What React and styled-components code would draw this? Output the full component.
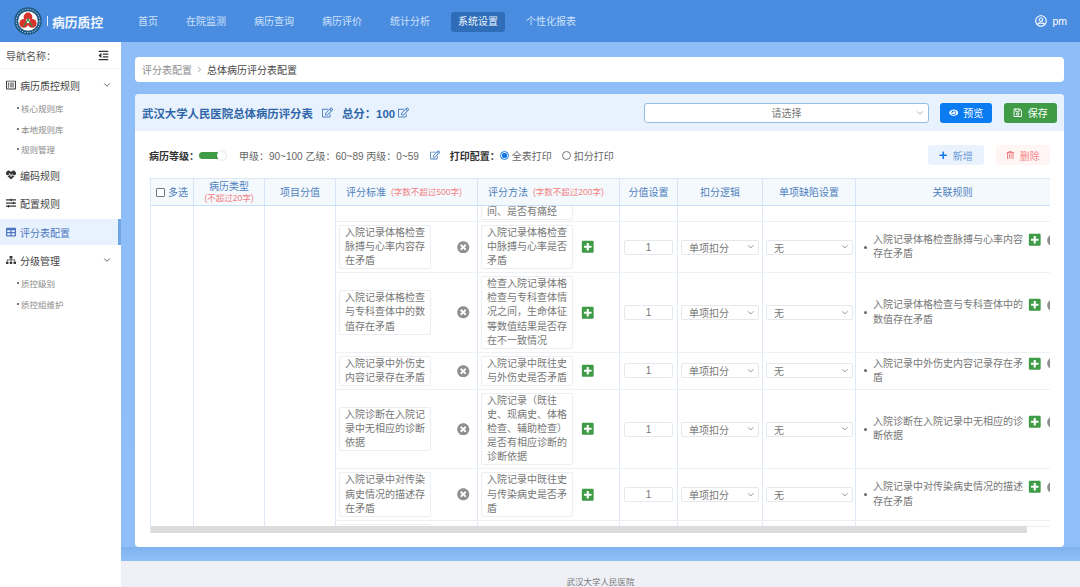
import React from 'react';
import styled, { createGlobalStyle } from 'styled-components';
import {
  FaRegEdit, FaEye, FaRegSave, FaPlus, FaRegTrashAlt, FaPlusSquare, FaTimesCircle,
  FaHeartbeat, FaSlidersH, FaTable, FaSitemap, FaOutdent, FaRegUserCircle, FaRegListAlt
} from 'react-icons/fa';
import { FiChevronDown, FiChevronRight } from 'react-icons/fi';

const BLUE_TEXT = '#4f7fbd';
const LINE = '#dfe9f5';
const GREEN = '#3f9b46';

// full width punctuation
const COLON = '\uFF1A';
const COMMA = '\uFF0C';
const LP = '\uFF08';
const RP = '\uFF09';

const GlobalStyle = createGlobalStyle`
html, body {
  margin: 0;
  height: 587px;
  overflow: hidden;
  font-family: "Liberation Sans", "Noto Sans CJK SC", sans-serif;
  color: #666;
}
* { box-sizing: border-box; }
`;

const Page = styled.div`
width: 1080px;
height: 587px;
display: flex;
flex-direction: column;
overflow: hidden;
`;

const TopBar = styled.header`
height: 42px;
flex: none;
display: flex;
align-items: center;
padding: 0 13px 0 14px;
background: #4a8de0;
color: #fff;
`;

const Brand = styled.div`
width: 117px;
display: flex;
align-items: center;
gap: 4px;
font-size: 12.8px;
font-weight: 700;
color: #f2f7fe;
`;

const BrandBar = styled.span`
width: 1px;
height: 10px;
margin-left: 1px;
background: #e6f0fc;
`;

const NavList = styled.nav`
flex: 1;
display: flex;
align-items: center;
gap: 14px;
margin-top: 1px;
`;

const NavItem = styled.div`
padding: 3px 7px;
font-size: 10px;
line-height: 14px;
border-radius: 3px;
color: ${props => props.$active ? '#eaf3ff' : '#cfe2fb'};
background: ${props => props.$active ? '#2f6db8' : 'transparent'};
`;

const UserBox = styled.div`
display: flex;
align-items: center;
gap: 5px;
font-size: 10.5px;
svg { font-size: 12px; }
`;

const Body = styled.div`
flex: 1;
display: flex;
min-height: 0;
`;

const Side = styled.aside`
width: 121px;
flex: none;
background: #fff;
font-size: 10px;
`;

const SideHead = styled.div`
height: 27px;
padding: 0 12px 0 6px;
display: flex;
align-items: center;
justify-content: space-between;
font-size: 10px;
color: #555;
border-bottom: 1px solid #f2f4f7;
svg { font-size: 11px; color: #333; }
`;

const SideItem = styled.div`
height: ${props => props.$h || 27}px;
margin-top: ${props => props.$mt || 0}px;
padding: 0 ${props => props.$active ? 6 : 9}px 0 6px;
display: flex;
align-items: center;
gap: 4px;
color: ${props => props.$active ? '#4f78c0' : '#444'};
background: ${props => props.$active ? '#e8f2fe' : 'transparent'};
border-right: ${props => props.$active ? '3px solid #6fa3e4' : '0'};
font-size: 10px;
> svg:first-child { width: 10px; font-size: 10px; color: ${props => props.$active ? '#4f78c0' : '#333'}; }
`;

const SideLabel = styled.span`
flex: 1;
`;

const SubItem = styled.div`
height: 20.5px;
padding-left: 17px;
display: flex;
align-items: center;
font-size: 8.5px;
color: #8b8b8b;
&::before {
  content: '';
  width: 2px;
  height: 2px;
  margin-right: 2px;
  background: #777;
}
`;

const Content = styled.main`
flex: 1;
display: flex;
flex-direction: column;
min-width: 0;
`;

const Stage = styled.div`
height: 519px;
flex: none;
padding: 15px 16px 14px 14px;
display: flex;
flex-direction: column;
gap: 12px;
background: linear-gradient(180deg, #8fbdf8 0%, #90bef9 97.2%, #7fb3ee 97.3%, #90bff9 100%);
`;

const Crumbs = styled.div`
height: 25px;
flex: none;
display: flex;
align-items: center;
gap: 3px;
padding: 0 7px;
background: #fff;
border-radius: 4px;
font-size: 10px;
color: #8e8e8e;
b { font-weight: 400; color: #484848; }
svg { font-size: 9px; color: #888; }
`;

const Panel = styled.section`
flex: 1;
min-height: 0;
display: flex;
flex-direction: column;
background: #fff;
border-radius: 4px;
overflow: hidden;
`;

const PanelHead = styled.div`
height: 37px;
flex: none;
display: flex;
align-items: center;
padding: 0 7px;
background: #e8f2fe;
`;

const PanelTitle = styled.div`
display: flex;
align-items: center;
font-size: 11.4px;
font-weight: 700;
color: #2f66a8;
white-space: nowrap;
`;

const EditIcon = styled(FaRegEdit)`
font-size: ${props => props.$size || 11}px;
margin-left: ${props => props.$ml || 0}px;
margin-right: ${props => props.$mr || 0}px;
color: #4a7fc0;
flex: none;
`;

const PlanSelect = styled.div`
width: 285px;
height: 20px;
margin-left: 235px;
position: relative;
display: flex;
align-items: center;
justify-content: center;
background: #fff;
border: 1px solid #90bde6;
border-radius: 3px;
font-size: 10px;
color: #777;
svg { position: absolute; right: 3px; top: 4px; font-size: 10px; color: #999; }
`;

const SolidButton = styled.button`
height: 20px;
width: ${props => props.$w}px;
margin-left: ${props => props.$ml}px;
border: 0;
border-radius: 3px;
display: flex;
align-items: center;
justify-content: center;
gap: 5px;
padding: 0;
font-family: inherit;
font-size: 10px;
color: #fff;
background: ${props => props.$bg};
svg { font-size: 9.5px; }
`;

const PanelBody = styled.div`
flex: 1;
min-height: 0;
padding: 14px 14px 14px 15px;
display: flex;
flex-direction: column;
`;

const Tools = styled.div`
height: 20px;
margin: 0 0 13px -1px;
flex: none;
display: flex;
align-items: center;
font-size: 10px;
color: #666;
white-space: nowrap;
`;

const ToolLabel = styled.b`
color: #333;
font-weight: 700;
`;

const Toggle = styled.span`
position: relative;
width: 27px;
height: 7px;
margin-right: 13px;
border-radius: 4px;
background: linear-gradient(90deg, ${GREEN} 0 72%, #f0f0f0 72%);
&::after {
  content: '';
  position: absolute;
  right: 0;
  top: -1px;
  width: 9px;
  height: 9px;
  border-radius: 50%;
  background: #fff;
  box-shadow: 0 0 2px rgba(0,0,0,0.25);
}
`;

const Radio = styled.span`
width: 9px;
height: 9px;
margin-right: 3px;
margin-left: ${props => props.$ml || 0}px;
border-radius: 50%;
flex: none;
border: 1px solid ${props => props.$on ? '#1677e6' : '#777'};
background: ${props => props.$on ? 'radial-gradient(circle, #1677e6 0 2.4px, #fff 3px)' : '#fff'};
`;

const ToolSpacer = styled.span`
flex: 1;
`;

const SoftButton = styled.div`
height: 20px;
width: ${props => props.$w}px;
margin-left: ${props => props.$ml || 0}px;
border-radius: 3px;
display: flex;
align-items: center;
justify-content: center;
gap: 5px;
background: ${props => props.$danger ? '#fff5f5' : '#eaf3fd'};
color: ${props => props.$danger ? '#f58a8a' : '#6b9bd8'};
svg { font-size: 8.5px; color: ${props => props.$danger ? '#ee6a6a' : '#1677e6'}; }
`;

const TableBox = styled.div`
flex: 1;
min-height: 0;
position: relative;
overflow: hidden;
border-left: 1px solid ${LINE};
`;

const columns = '43px 71px 71px 142px 142px 58px 85px 93px 300px';

const HeadRow = styled.div`
height: 28px;
width: 1005px;
display: grid;
grid-template-columns: ${columns};
background: #f4f9fe;
border-top: 1px solid #dbe8f5;
border-bottom: 1px solid #c9e2f7;
`;

const HeadCell = styled.div`
display: flex;
flex-direction: column;
align-items: ${props => props.$left ? 'flex-start' : 'center'};
justify-content: center;
padding-left: ${props => props.$left ? props.$left : 0}px;
padding-right: ${props => props.$pr || 0}px;
border-right: 1px solid #d3e5f6;
font-size: 10px;
line-height: 13px;
color: ${BLUE_TEXT};
white-space: nowrap;
small { font-size: 8.5px; line-height: 11px; color: #f27f7f; }
`;

const HeadInline = styled.div`
display: flex;
align-items: center;
gap: ${props => props.$gap || 0}px;
small { font-size: 8.5px; color: #f27f7f; }
`;

const CheckBox = styled.span`
width: 9px;
height: 9px;
margin-right: 3px;
border: 1px solid #777;
border-radius: 1px;
background: #fff;
`;

const RowsWrap = styled.div`
width: 1005px;
display: flex;
height: 320px;
overflow: hidden;
`;

const MergedCell = styled.div`
width: ${props => props.$w}px;
flex: none;
border-right: 1px solid ${LINE};
`;

const Rows = styled.div`
flex: 1;
min-width: 0;
`;

const dataColumns = '142px 142px 58px 85px 93px 300px';

const Row = styled.div`
display: grid;
grid-template-columns: ${dataColumns};
border-bottom: 1px solid #edf0f4;
`;

const ClippedRow = styled(Row)`
height: ${props => props.$h}px;
overflow: hidden;
`;

const Cell = styled.div`
display: flex;
align-items: ${props => props.$top ? 'flex-start' : 'center'};
padding: 3px 0 3px ${props => props.$pl || 0}px;
border-right: 1px solid ${LINE};
min-width: 0;
`;

const TopCell = styled(Cell)`
align-items: flex-end;
padding-top: 0;
padding-bottom: 1px;
height: 15px;
`;

const TextBox = styled.div`
width: 92px;
flex: none;
padding: 0 5px;
border: 1px solid #eceef1;
border-radius: 2px;
font-size: 10px;
line-height: 14.1px;
color: #777;
background: #fff;
`;

const RemoveIcon = styled(FaTimesCircle)`
margin-left: 26px;
font-size: 12.5px;
color: #8f8f8f;
flex: none;
`;

const AddIcon = styled(FaPlusSquare)`
margin-left: ${props => props.$ml || 8}px;
font-size: 13.5px;
color: ${GREEN};
flex: none;
`;

const ScoreInput = styled.div`
width: 49px;
height: 15px;
display: flex;
align-items: center;
justify-content: center;
border: 1px solid #e6e8ec;
border-radius: 2px;
font-size: 10px;
color: #777;
`;

const DropDown = styled.div`
width: ${props => props.$w}px;
height: 15px;
display: flex;
align-items: center;
justify-content: space-between;
padding: 0 3px 0 7px;
border: 1px solid #e6e8ec;
border-radius: 2px;
font-size: 10px;
color: #777;
svg { font-size: 9.5px; color: #777; }
`;

const Rule = styled.div`
display: flex;
align-items: center;
align-self: center;
margin-left: 8px;
`;

const RuleDot = styled.span`
width: 3px;
height: 3px;
margin-right: 6px;
flex: none;
border-radius: 50%;
background: #666;
`;

const RuleText = styled.div`
width: 150px;
flex: none;
font-size: 10px;
line-height: 14.1px;
color: #777;
`;

const RuleTools = styled.div`
align-self: flex-start;
display: flex;
align-items: center;
`;

const RuleGhost = styled(FaTimesCircle)`
margin-left: 5px;
font-size: 12.5px;
color: #8f8f8f;
flex: none;
`;

const ScrollThumb = styled.div`
position: absolute;
left: 0;
bottom: 0;
width: 876px;
height: 7px;
background: #dcdcdc;
`;

const ScrollTrack = styled.div`
position: absolute;
left: 0;
right: 0;
bottom: 0;
height: 7px;
background: #fff;
border-top: 1px solid #f0f0f0;
`;

const Footer = styled.footer`
flex: 1;
display: flex;
justify-content: center;
padding-top: 15px;
background: #eef0f6;
font-size: 8.5px;
line-height: 12px;
color: #777;
`;

const navItems = ['首页', '在院监测', '病历查询', '病历评价', '统计分析', '系统设置', '个性化报表'];

const rows = [
  {
    standard: '入院记录体格检查脉搏与心率内容存在矛盾',
    method: '入院记录体格检查中脉搏与心率是否矛盾',
    rule: '入院记录体格检查脉搏与心率内容存在矛盾'
  },
  {
    standard: '入院记录体格检查与专科查体中的数值存在矛盾',
    method: `检查入院记录体格检查与专科查体情况之间${COMMA}生命体征等数值结果是否存在不一致情况`,
    rule: '入院记录体格检查与专科查体中的数值存在矛盾'
  },
  {
    standard: '入院记录中外伤史内容记录存在矛盾',
    method: '入院记录中既往史与外伤史是否矛盾',
    rule: '入院记录中外伤史内容记录存在矛盾'
  },
  {
    standard: '入院诊断在入院记录中无相应的诊断依据',
    method: `入院记录${LP}既往史、现病史、体格检查、辅助检查${RP}是否有相应诊断的诊断依据`,
    rule: '入院诊断在入院记录中无相应的诊断依据'
  },
  {
    standard: '入院记录中对传染病史情况的描述存在矛盾',
    method: '入院记录中既往史与传染病史是否矛盾',
    rule: '入院记录中对传染病史情况的描述存在矛盾'
  }
];

// hospital emblem: ring, white field, red trefoil
const Logo = () => (
  <svg width="28" height="28" viewBox="0 0 28 28">
    <circle cx="14" cy="14" r="13.8" fill="#1f5a86" />
    <circle cx="14" cy="14" r="11.8" fill="none" stroke="#d8e6ee" strokeWidth="1" strokeDasharray="1.2 1.4" />
    <circle cx="14" cy="14" r="9.8" fill="#fff" />
    <circle cx="14" cy="10" r="4.4" fill="#d8322c" />
    <circle cx="9.8" cy="16.4" r="4.4" fill="#d8322c" />
    <circle cx="18.2" cy="16.4" r="4.4" fill="#d8322c" />
    <circle cx="14" cy="14" r="2.2" fill="#fff" />
    <path d="M9.5 19.5 C12 17 13 14 14 12 C15 14 16 17 18.5 19.5" fill="none" stroke="#2f8f4a" strokeWidth="1.2" />
  </svg>
);

export default function App() {
  return (
    <Page>
      <GlobalStyle />
      <TopBar>
        <Brand>
          <Logo />
          <BrandBar />
          病历质控
        </Brand>
        <NavList>
          {navItems.map(name => (
            <NavItem key={name} $active={name === '系统设置'}>{name}</NavItem>
          ))}
        </NavList>
        <UserBox><FaRegUserCircle />pm</UserBox>
      </TopBar>
      <Body>
        <Side>
          <SideHead>{`导航名称${COLON}`}<FaOutdent /></SideHead>
          <SideItem $mt={3} $h={26}><FaRegListAlt /><SideLabel>病历质控规则</SideLabel><FiChevronDown /></SideItem>
          <SubItem>核心规则库</SubItem>
          <SubItem>本地规则库</SubItem>
          <SubItem>规则管理</SubItem>
          <SideItem $mt={1.5} $h={28}><FaHeartbeat /><SideLabel>编码规则</SideLabel></SideItem>
          <SideItem $h={28}><FaSlidersH /><SideLabel>配置规则</SideLabel></SideItem>
          <SideItem $mt={2} $active $h={26}><FaTable /><SideLabel>评分表配置</SideLabel></SideItem>
          <SideItem $mt={2} $h={26}><FaSitemap /><SideLabel>分级管理</SideLabel><FiChevronDown /></SideItem>
          <SubItem>质控级别</SubItem>
          <SubItem>质控组维护</SubItem>
        </Side>
        <Content>
          <Stage>
            <Crumbs>评分表配置<FiChevronRight /><b>总体病历评分表配置</b></Crumbs>
            <Panel>
              <PanelHead>
                <PanelTitle>
                  武汉大学人民医院总体病历评分表
                  <EditIcon $ml={9} $mr={9} />
                  {`总分${COLON}100`}
                  <EditIcon $ml={3} />
                </PanelTitle>
                <PlanSelect>请选择<FiChevronDown /></PlanSelect>
                <SolidButton $w={52} $ml={11} $bg="#0a7bf0"><FaEye />预览</SolidButton>
                <SolidButton $w={53} $ml={12} $bg={GREEN}><FaRegSave />保存</SolidButton>
              </PanelHead>
              <PanelBody>
                <Tools>
                  <ToolLabel>{`病历等级${COLON}`}</ToolLabel>
                  <Toggle />
                  {`甲级${COLON}90~100 乙级${COLON}60~89 丙级${COLON}0~59`}
                  <EditIcon $ml={11} $mr={10} $size={10} />
                  <ToolLabel>{`打印配置${COLON}`}</ToolLabel>
                  <Radio $on />全表打印
                  <Radio $ml={10} />扣分打印
                  <ToolSpacer />
                  <SoftButton $w={56}><FaPlus />新增</SoftButton>
                  <SoftButton $w={54} $ml={12} $danger><FaRegTrashAlt />删除</SoftButton>
                </Tools>
                <TableBox>
                  <HeadRow>
                    <HeadCell $left={5}>
                      <HeadInline><CheckBox />多选</HeadInline>
                    </HeadCell>
                    <HeadCell>病历类型<small>(不超过20字)</small></HeadCell>
                    <HeadCell>项目分值</HeadCell>
                    <HeadCell $left={10}><HeadInline $gap={5}>评分标准<small>(字数不超过500字)</small></HeadInline></HeadCell>
                    <HeadCell $left={10}><HeadInline $gap={5}>评分方法<small>(字数不超过200字)</small></HeadInline></HeadCell>
                    <HeadCell>分值设置</HeadCell>
                    <HeadCell>扣分逻辑</HeadCell>
                    <HeadCell>单项缺陷设置</HeadCell>
                    <HeadCell $pr={106}>关联规则</HeadCell>
                  </HeadRow>
                  <RowsWrap>
                    <MergedCell $w={43} />
                    <MergedCell $w={71} />
                    <MergedCell $w={71} />
                    <Rows>
                      <ClippedRow $h={16}>
                        <TopCell />
                        <TopCell $pl={3}><TextBox>间、是否有痛经</TextBox></TopCell>
                        <TopCell />
                        <TopCell />
                        <TopCell />
                        <TopCell />
                      </ClippedRow>
                      {rows.map(row => (
                        <Row key={row.standard}>
                          <Cell $pl={3}><TextBox>{row.standard}</TextBox><RemoveIcon /></Cell>
                          <Cell $pl={3}><TextBox>{row.method}</TextBox><AddIcon /></Cell>
                          <Cell $pl={4}><ScoreInput>1</ScoreInput></Cell>
                          <Cell $pl={3}><DropDown $w={78}>单项扣分<FiChevronDown /></DropDown></Cell>
                          <Cell $pl={3}><DropDown $w={87}>无<FiChevronDown /></DropDown></Cell>
                          <Cell>
                            <Rule>
                              <RuleDot />
                              <RuleText>{row.rule}</RuleText>
                              <RuleTools><AddIcon $ml={5} /><RuleGhost /></RuleTools>
                            </Rule>
                          </Cell>
                        </Row>
                      ))}
                      <ClippedRow $h={16}>
                        <Cell $pl={3} $top><TextBox>入院记录中对传染病</TextBox></Cell>
                        <Cell />
                        <Cell />
                        <Cell />
                        <Cell />
                        <Cell />
                      </ClippedRow>
                    </Rows>
                  </RowsWrap>
                  <ScrollTrack />
                  <ScrollThumb />
                </TableBox>
              </PanelBody>
            </Panel>
          </Stage>
          <Footer>武汉大学人民医院</Footer>
        </Content>
      </Body>
    </Page>
  );
}
